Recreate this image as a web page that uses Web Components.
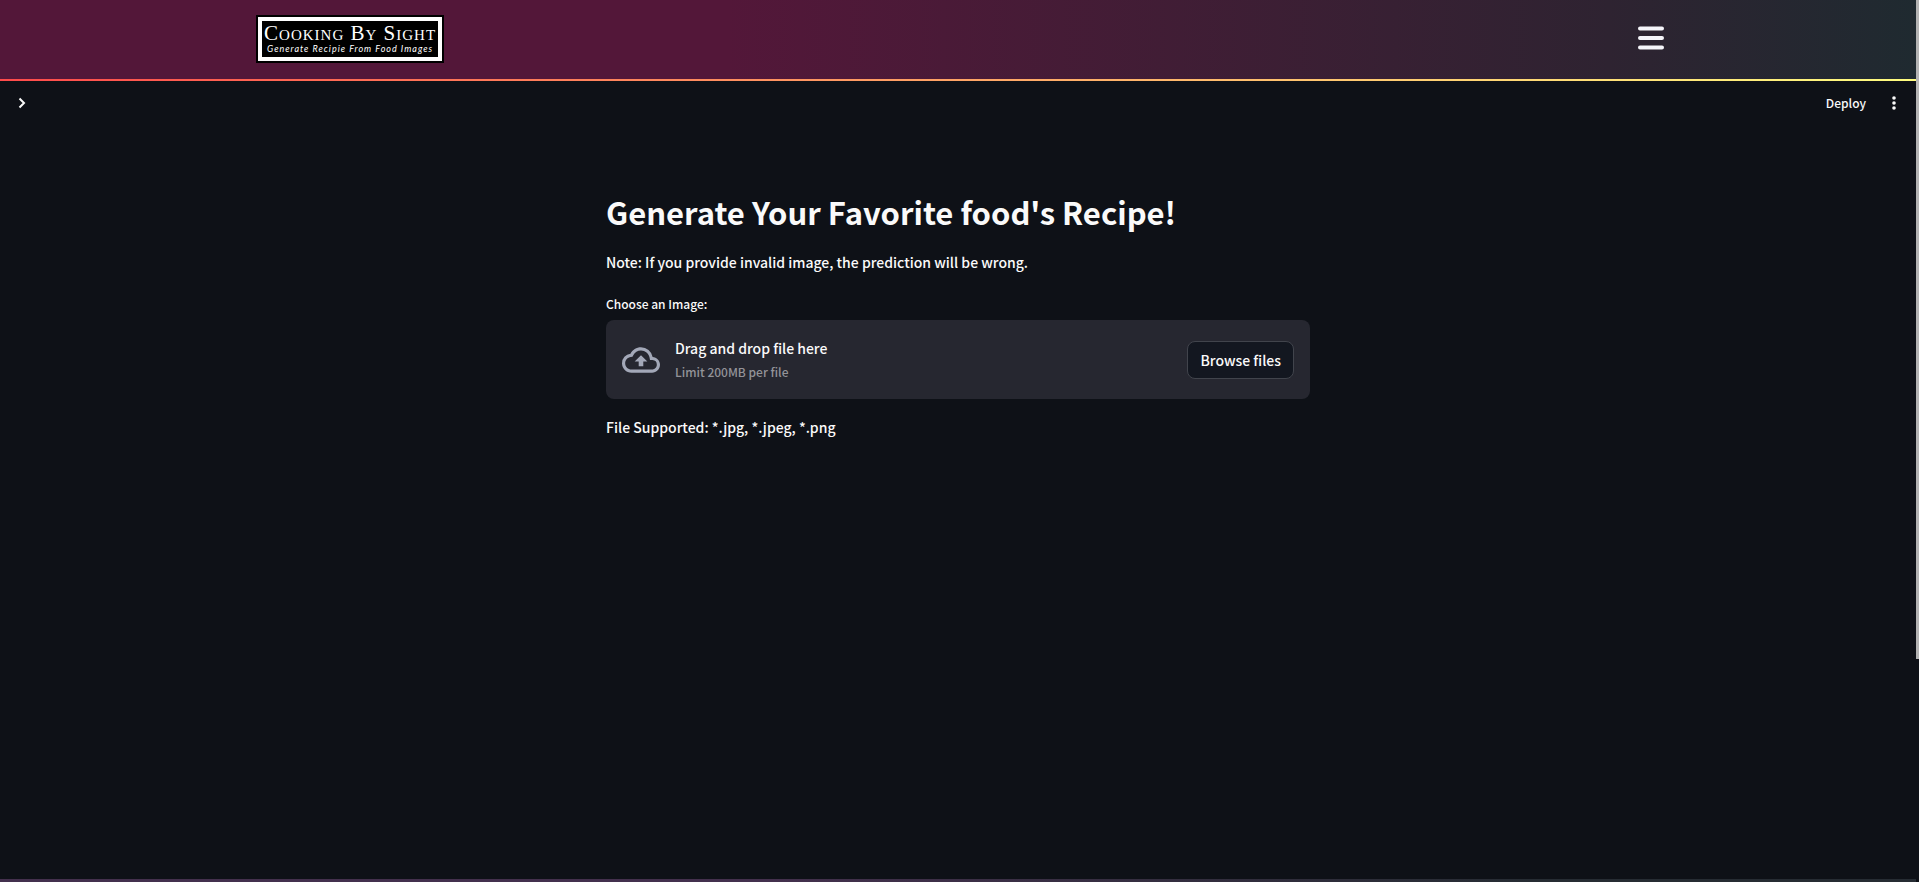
<!DOCTYPE html>
<html lang="en">
<head>
<meta charset="utf-8">
<meta name="viewport" content="width=device-width, initial-scale=1">
<title>Cooking By Sight</title>
<style>
html, body { margin: 0; min-height: 100%; background: #0e1117; }
body { font-family: "Noto Sans CJK SC", "Noto Sans", sans-serif; font-size: 14px; line-height: 24px; font-weight: 500; color: #fafafa; }
</style>
</head>
<body>
<cooking-app></cooking-app>
<script>
function define(name, html, ready) {
  const template = document.createElement('template');
  template.innerHTML = html;
  customElements.define(name, class extends HTMLElement {
    constructor() {
      super();
      this.attachShadow({ mode: 'open' }).append(template.content.cloneNode(true));
      if (ready) ready(this.shadowRoot);
    }
  });
}

define('brand-logo', `
<style>
:host { display: block; }
a { display: block; box-sizing: border-box; width: 188px; height: 48px; padding: 1px; background: #000; border: 1px solid #000; color: #fff; text-decoration: none; }
.frame { box-sizing: border-box; height: 44px; border: 4px solid #fff; display: flex; flex-direction: column; align-items: center; justify-content: center; white-space: nowrap; }
.name { font: 21px/20px "Liberation Serif", serif; font-variant: small-caps; letter-spacing: 1px; }
.tag { font: italic 9px/12px Lato, sans-serif; letter-spacing: 1px; }
</style>
<a href="#"><span class="frame"><span class="name">Cooking By Sight</span><span class="tag">Generate Recipie From Food Images</span></span></a>`);

define('site-header', `
<style>
:host { display: block; background: linear-gradient(90deg, #531739 38%, #2e2331 84%, #1f2a30); }
.bar { height: 79px; padding: 0 13%; display: flex; align-items: center; justify-content: space-between; }
.rule { height: 2px; background: linear-gradient(90deg, #ff4b4b, #fffd80); }
brand-logo { margin-left: 7px; margin-bottom: 2px; }
button { border: 0; background: none; padding: 0; margin: 0 3px 3px 0; width: 26px; height: 24px; color: #f5f5fa; }
svg { display: block; }
</style>
<div class="bar"><brand-logo></brand-logo>
<button aria-label="Menu"><svg width="26" height="24" viewBox="0 0 26 24" stroke="currentColor" stroke-width="4" stroke-linecap="round"><path d="M2 2.5H24M2 12H24M2 21.5H24"/></svg></button></div>
<div class="rule"></div>`);

define('app-toolbar', `
<style>
:host { display: flex; align-items: center; justify-content: space-between; height: 44px; padding: 0 14px; }
button { border: 0; background: none; padding: 0; color: inherit; font: inherit; font-size: 12px; line-height: 20px; }
.right { display: flex; align-items: center; gap: 20px; }
svg { display: block; }
</style>
<button aria-label="Open sidebar"><svg width="16" height="16" viewBox="0 0 16 16" fill="none" stroke="currentColor" stroke-width="2"><path d="M5.5 3.5L10 8L5.5 12.5"/></svg></button>
<div class="right"><button>Deploy</button>
<button aria-label="More options"><svg width="16" height="16" viewBox="0 0 16 16" fill="currentColor"><circle cx="8" cy="3" r="1.8"/><circle cx="8" cy="8" r="1.8"/><circle cx="8" cy="13" r="1.8"/></svg></button></div>`);

define('file-drop', `
<style>
:host { display: block; }
label { display: block; font-size: 12px; line-height: 24px; margin-bottom: 4px; }
.zone { display: flex; align-items: center; padding: 16px; background: #262730; border-radius: 8px; }
.cloud { display: block; color: #a3a8b8; margin-right: 15px; }
.text { flex: 1; display: flex; flex-direction: column; }
.hint { font-size: 12px; color: #939398; line-height: 23px; }
button { font: inherit; color: inherit; background: #131720; border: 1px solid #41444c; border-radius: 8px; padding: 6px 12px; }
</style>
<label for="file">Choose an Image:</label>
<input id="file" type="file" hidden>
<div class="zone">
<svg class="cloud" width="38" height="38" viewBox="0 0 24 24" fill="currentColor" aria-hidden="true"><path d="M19.35 10.04A7.49 7.49 0 0 0 12 4C9.11 4 6.6 5.64 5.35 8.04A5.994 5.994 0 0 0 0 14c0 3.31 2.69 6 6 6h13c2.76 0 5-2.24 5-5 0-2.64-2.05-4.78-4.65-4.96zM19 18H6c-2.21 0-4-1.79-4-4 0-2.05 1.53-3.76 3.56-3.97l1.07-.11.5-.95A5.469 5.469 0 0 1 12 6c2.62 0 4.88 1.86 5.39 4.43l.3 1.5 1.53.11A2.98 2.98 0 0 1 22 15c0 1.65-1.35 3-3 3zM8 13h2.55v3h2.9v-3H16l-4-4z"/></svg>
<div class="text"><span>Drag and drop file here</span><span class="hint">Limit 200MB per file</span></div>
<button type="button">Browse files</button>
</div>`, root => {
  root.querySelector('button').addEventListener('click', () => root.querySelector('input').click());
});

define('recipe-form', `
<style>
:host { display: block; box-sizing: border-box; max-width: 704px; margin: 0 auto; padding-top: 65px; }
h1 { margin: 0; font-size: 31px; line-height: 44px; font-weight: 700; }
p { margin: 16px 0; }
file-drop { margin-top: 18px; }
</style>
<h1>Generate Your Favorite food's Recipe!</h1>
<p>Note: If you provide invalid image, the prediction will be wrong.</p>
<file-drop></file-drop>
<p>File Supported: *.jpg, *.jpeg, *.png</p>`);

define('cooking-app', `
<style>
:host { display: grid; grid-template-columns: 1fr 3px; height: 100vh; overflow: hidden; }
.page { display: flex; flex-direction: column; min-width: 0; }
main { flex: 1; }
.foot { height: 3px; background: linear-gradient(90deg, #43304d 40%, #262c33 80%); }
.track { background: #0e1117; }
.thumb { height: 74.7%; background: #b3b3b3; }
</style>
<div class="page"><site-header></site-header><app-toolbar></app-toolbar><main><recipe-form></recipe-form></main><div class="foot"></div></div>
<div class="track"><div class="thumb"></div></div>`);
</script>
</body>
</html>
